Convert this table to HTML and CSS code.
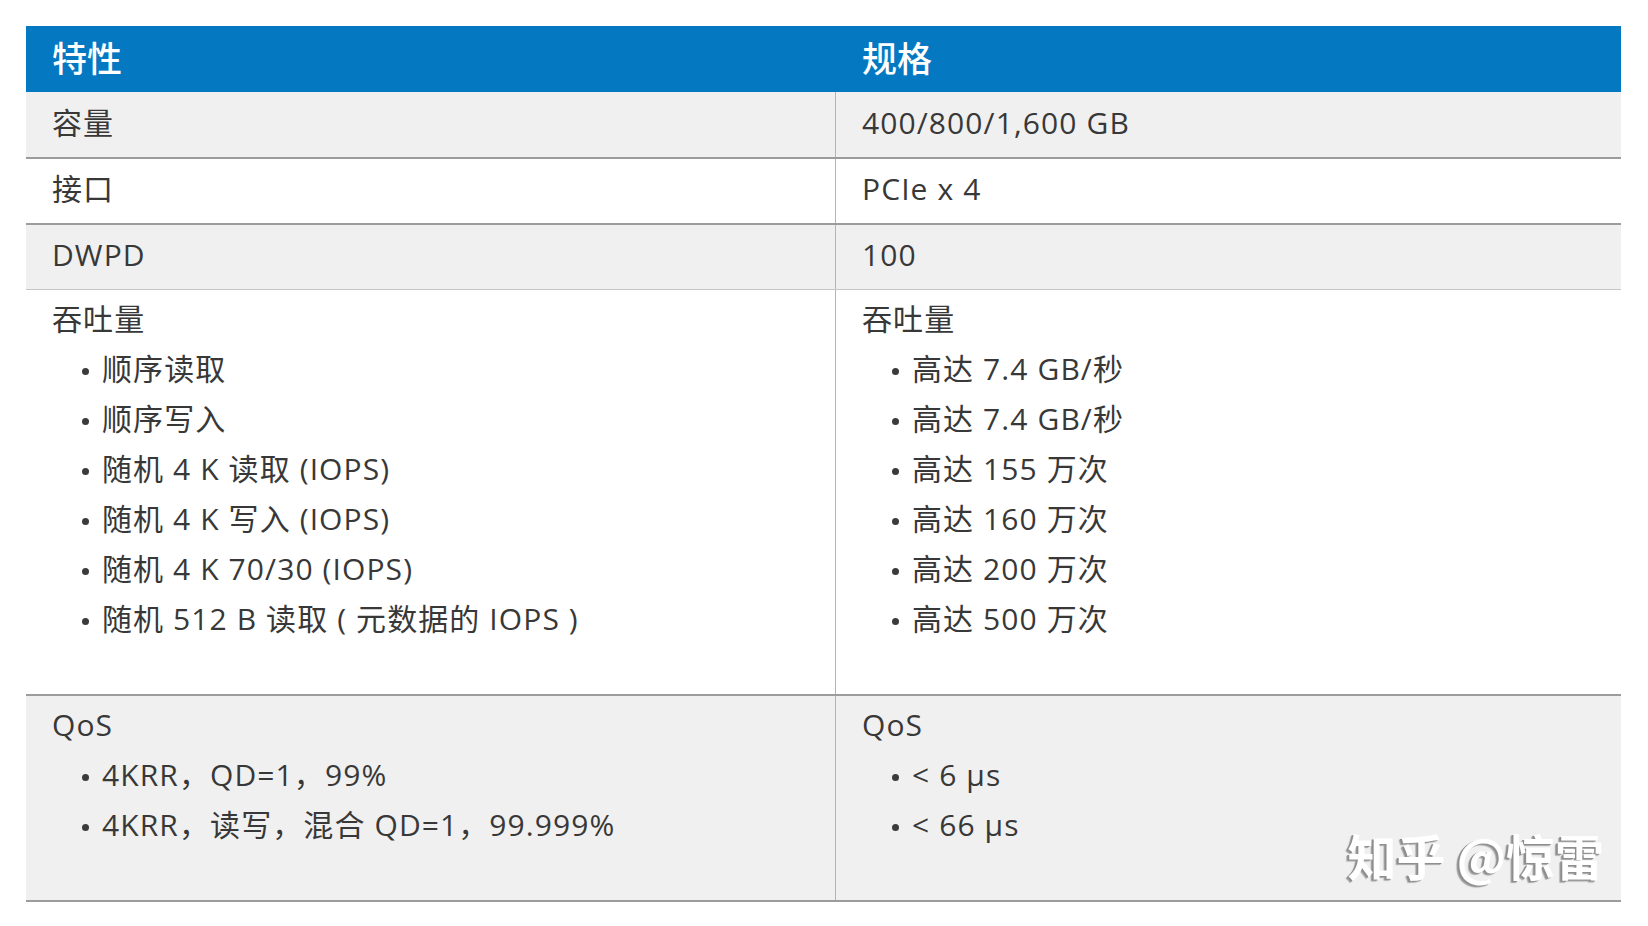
FILE: index.html
```html
<!DOCTYPE html>
<html lang="zh-CN">
<head>
<meta charset="utf-8">
<title>规格</title>
<link rel="stylesheet" href="styles.css">
</head>
<body>
<div class="spec">
  <div class="row head">
    <div class="cell">特性</div>
    <div class="cell">规格</div>
  </div>
  <div class="row shade line-dark r1">
    <div class="cell left">容量</div>
    <div class="cell">400/800/1,600 GB</div>
  </div>
  <div class="row line-dark r2">
    <div class="cell left">接口</div>
    <div class="cell">PCIe x 4</div>
  </div>
  <div class="row shade line-light r3">
    <div class="cell left">DWPD</div>
    <div class="cell">100</div>
  </div>
  <div class="row tall line-dark">
    <div class="cell left block">
      <div class="title">吞吐量</div>
      <ul class="list">
        <li>顺序读取</li>
        <li>顺序写入</li>
        <li>随机 4 K 读取 (IOPS)</li>
        <li>随机 4 K 写入 (IOPS)</li>
        <li>随机 4 K 70/30 (IOPS)</li>
        <li>随机 512 B 读取 ( 元数据的 IOPS )</li>
      </ul>
    </div>
    <div class="cell block">
      <div class="title">吞吐量</div>
      <ul class="list">
        <li>高达 7.4 GB/秒</li>
        <li>高达 7.4 GB/秒</li>
        <li>高达 155 万次</li>
        <li>高达 160 万次</li>
        <li>高达 200 万次</li>
        <li>高达 500 万次</li>
      </ul>
    </div>
  </div>
  <div class="row shade qos line-dark">
    <div class="cell left block">
      <div class="title">QoS</div>
      <ul class="list">
        <li>4KRR，QD=1，99%</li>
        <li>4KRR，读写，混合 QD=1，99.999%</li>
      </ul>
    </div>
    <div class="cell block mark-host">
      <div class="title">QoS</div>
      <ul class="list">
        <li>&lt; 6 µs</li>
        <li>&lt; 66 µs</li>
      </ul>
      <div class="watermark">知乎 @惊雷</div>
    </div>
  </div>
</div>
</body>
</html>
```

FILE: styles.css
```css
* { box-sizing: border-box; }

html, body {
  margin: 0;
  padding: 0;
  background: #ffffff;
}

body {
  padding: 26px 27px 0 26px;
  font-family: "Open Sans", "Noto Sans CJK SC", sans-serif;
  font-size: 30px;
  letter-spacing: 1.1px;
  color: #383838;
}

.spec {
  width: 1595px;
}

.row {
  display: grid;
  grid-template-columns: 810px 1fr;
}

.head {
  height: 66px;
  background: #0479c2;
  color: #ffffff;
  font-size: 35px;
  font-weight: 500;
  letter-spacing: 0;
}

.head .cell {
  display: flex;
  align-items: center;
  padding-left: 26px;
  padding-bottom: 0;
}

.r1 { height: 67px; }
.r2 { height: 66px; }
.r3 { height: 65px; }
.tall { height: 406px; }
.qos { height: 206px; }

.shade { background: #f0f0f0; }

.line-dark { border-bottom: 2px solid #9c9c9c; }
.line-light { border-bottom: 1px solid #c6c6c6; }

.cell {
  padding-left: 26px;
  padding-bottom: 4px;
  display: flex;
  align-items: center;
  line-height: 50px;
}

.cell.left {
  border-right: 1px solid #b4b4b4;
}

.cell.block {
  display: block;
  padding-top: 4px;
  padding-bottom: 0;
}

.title {
  height: 50px;
}

.list {
  list-style: none;
  margin: 0;
  padding: 0;
}

.list li {
  height: 50px;
  padding-left: 28px;
  white-space: nowrap;
}

.list li::before {
  content: "";
  display: inline-block;
  width: 7px;
  height: 7px;
  border-radius: 50%;
  background: #3b3b3b;
  margin-left: 2px;
  margin-right: 13px;
  vertical-align: middle;
}

.mark-host {
  position: relative;
}

.watermark {
  position: absolute;
  right: 17px;
  bottom: 20px;
  font-family: "Noto Sans CJK SC", sans-serif;
  font-size: 49px;
  font-weight: 700;
  line-height: 50px;
  letter-spacing: 0;
  color: #ffffff;
  text-shadow: -2px 1px 0 #8e8e8e, -3px 2px 1px #a6a6a6;
}
```
